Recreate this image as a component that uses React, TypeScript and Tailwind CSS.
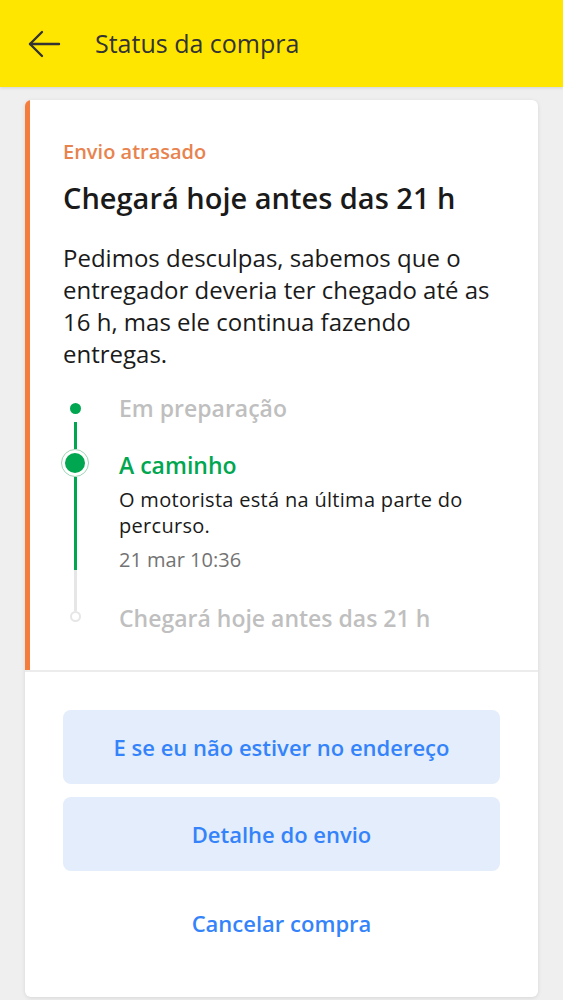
import React from "react";

const FONT = { fontFamily: "'Open Sans', 'Noto Sans', sans-serif" };

const BackArrow = () => (
  <svg width="34" height="30" viewBox="0 0 34 30" fill="none" stroke="#333" strokeWidth="2.4" strokeLinecap="round" strokeLinejoin="round">
    <path d="M32 15H3" />
    <path d="M15 3L3 15l12 12" />
  </svg>
);

const Timeline = () => (
  <div className="mt-[24px] flex">
    <div className="w-[24px] mr-[32px] flex flex-col items-center shrink-0">
      <div className="h-[28px] flex items-center">
        <div className="w-[11px] h-[11px] rounded-full bg-[#00a650]" />
      </div>
      <div className="w-[3px] h-[27px] bg-[#00a650]" />
      <div className="w-[28px] h-[28px] rounded-full border border-[#9fd3b6] flex items-center justify-center shrink-0">
        <div className="w-[20px] h-[20px] rounded-full bg-[#00a650]" />
      </div>
      <div className="w-[3px] h-[93px] bg-[#00a650]" />
      <div className="w-[3px] h-[41px] bg-[#e6e6e6]" />
      <div className="w-[11px] h-[11px] rounded-full border-2 border-[#e6e6e6] bg-white" />
    </div>
    <div className="flex flex-col">
      <div className="h-[28px] flex items-center text-[23px] font-semibold text-[#bfbfbf] whitespace-nowrap">Em preparação</div>
      <div className="mt-[29px] h-[28px] flex items-center text-[23px] font-semibold text-[#00a650]">A caminho</div>
      <p className="mt-[8px] text-[20px] leading-[26px] tracking-[0.3px] text-[#1a1a1a]">
        O motorista está na última parte do
        <br />
        percurso.
      </p>
      <p className="mt-[9px] text-[20px] leading-[24px] text-[#737373]">21 mar 10:36</p>
      <div className="mt-[32px] h-[28px] flex items-center text-[23px] font-semibold text-[#bfbfbf] whitespace-nowrap">Chegará hoje antes das 21 h</div>
    </div>
  </div>
);

export default function App() {
  return (
    <div className="min-h-[1000px] bg-[#efefef]" style={FONT}>
      <header className="h-[87px] bg-[#ffe600] flex items-center pl-[27px] shadow-[0_1px_3px_rgba(0,0,0,0.12)]">
        <BackArrow />
        <h1 className="ml-[34px] text-[25px] text-[#333] font-normal">Status da compra</h1>
      </header>

      <div className="px-[25px] pt-[13px]">
        <div className="bg-white rounded-[6px] shadow-[0_1px_4px_rgba(0,0,0,0.1)] overflow-hidden">
          <div className="border-l-[5px] border-[#f47c3c] pl-[33px] pr-[30px] pt-[40px] pb-[38px]">
            <p className="text-[20px] font-semibold text-[#e8834e] leading-[24px]">Envio atrasado</p>
            <h2 className="mt-[16px] text-[29px] font-semibold text-[#1a1a1a] leading-[36px] whitespace-nowrap">Chegará hoje antes das 21 h</h2>
            <p className="mt-[26px] text-[24px] leading-[32px] text-[#1a1a1a]">
              Pedimos desculpas, sabemos que o
              <br />
              entregador deveria ter chegado até as
              <br />
              16 h, mas ele continua fazendo
              <br />
              entregas.
            </p>
            <Timeline />
          </div>
          <div className="border-t-2 border-[#ececec] px-[38px] pt-[38px] pb-[35px] flex flex-col gap-[13px]">
            <button className="h-[74px] rounded-[8px] bg-[#e3edfb] text-[#3483fa] text-[22px] font-semibold">
              E se eu não estiver no endereço
            </button>
            <button className="h-[74px] rounded-[8px] bg-[#e3edfb] text-[#3483fa] text-[22px] font-semibold">
              Detalhe do envio
            </button>
            <button className="h-[78px] rounded-[8px] text-[#3483fa] text-[22px] font-semibold">
              Cancelar compra
            </button>
          </div>
        </div>
      </div>
    </div>
  );
}
